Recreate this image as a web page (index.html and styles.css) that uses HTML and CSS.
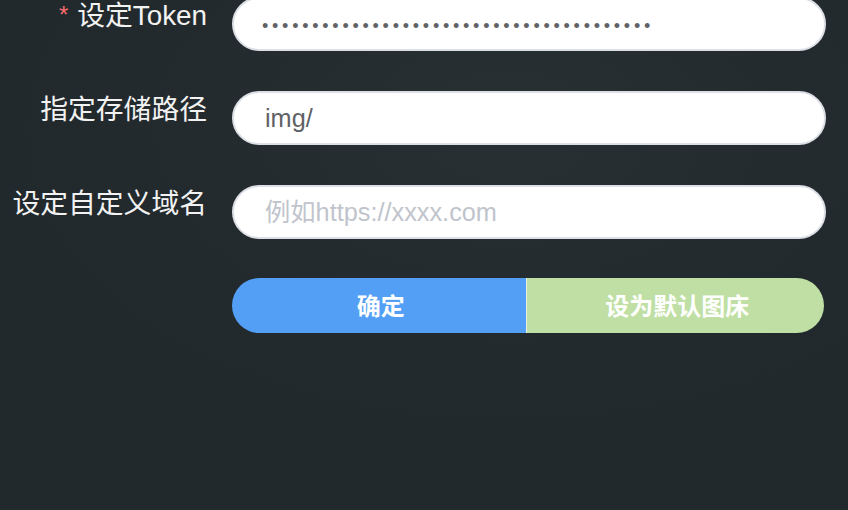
FILE: index.html
```html
<!DOCTYPE html>
<html lang="zh-CN">
<head>
<meta charset="utf-8">
<title>设置</title>
<link rel="stylesheet" href="styles.css">
</head>
<body>
<form class="form">
  <div class="row">
    <label class="label required" for="token">设定Token</label>
    <input class="input password" id="token" type="password" value="ghp_abcdefghijklmnopqrstuvwxyz012345678">
  </div>
  <div class="row">
    <label class="label" for="path">指定存储路径</label>
    <input class="input" id="path" type="text" value="img/">
  </div>
  <div class="row">
    <label class="label" for="domain">设定自定义域名</label>
    <input class="input" id="domain" type="text" placeholder="例如https://xxxx.com">
  </div>
  <div class="row buttons-row">
    <span></span>
    <div class="btn-group">
      <button type="button" class="btn btn-primary">确定</button>
      <button type="button" class="btn btn-success">设为默认图床</button>
    </div>
  </div>
</form>
</body>
</html>
```
FILE: styles.css
```css
html, body {
  margin: 0;
  height: 100%;
}
body {
  background: radial-gradient(ellipse 60% 60% at 60% 25%, #273033 0%, #232a2e 70%, #22292c 100%);
  font-family: "Liberation Sans", "Noto Sans CJK SC", sans-serif;
  overflow: hidden;
}
.form {
  display: flex;
  flex-direction: column;
  gap: 40px;
  margin-top: -3px;
  padding-right: 22px;
}
.row {
  display: grid;
  grid-template-columns: 207px 594px;
  column-gap: 25px;
  align-items: start;
}
.label {
  text-align: right;
  color: #f2f2f2;
  font-size: 27.8px;
  line-height: 38px;
  white-space: nowrap;
}
.required::before {
  content: "*";
  color: #f56c6c;
  margin-right: 9px;
  font-size: 24px;
  position: relative;
  top: -2px;
}
.input {
  box-sizing: border-box;
  height: 54px;
  width: 594px;
  border: 2px solid #dcdfe6;
  border-radius: 27px;
  background: #fff;
  padding: 0 20px 0 31px;
  font-family: "Liberation Sans", "Noto Sans CJK SC", sans-serif;
  font-size: 25.3px;
  color: #606266;
  outline: none;
}
.input::placeholder {
  color: #c0c4cc;
}
.password {
  font-size: 18px;
  letter-spacing: 3.75px;
  padding-left: 28px;
  padding-top: 4px;
}
.buttons-row {
  margin-top: -1px;
}
.btn-group {
  display: flex;
  width: 592px;
  height: 55px;
  border-radius: 28px;
  overflow: hidden;
}
.btn {
  flex: 1;
  border: none;
  margin: 0;
  padding: 0 0 3px 4px;
  color: #fff;
  font-family: "Noto Sans CJK SC", sans-serif;
  font-weight: 700;
  font-size: 24px;
  cursor: pointer;
}
.btn-primary {
  background: #539ff5;
}
.btn-success {
  background: #bfdfa4;
  border-left: 1px solid #e9f2e2;
  flex: 1.013;
}
```
